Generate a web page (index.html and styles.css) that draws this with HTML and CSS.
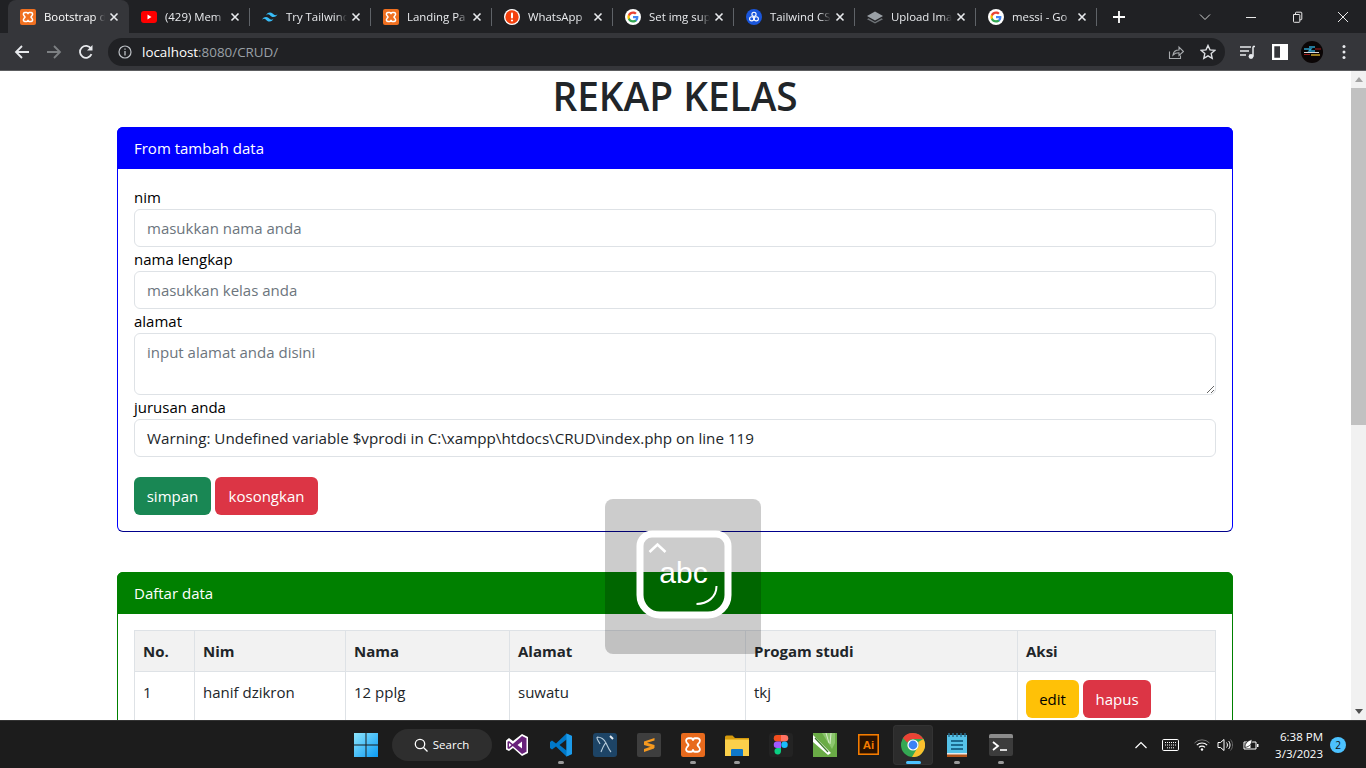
FILE: index.html
```html
<!DOCTYPE html>
<html lang="en">
<head>
<meta charset="utf-8">
<title>REKAP KELAS</title>
<link rel="stylesheet" href="styles.css">
</head>
<body>
<svg class="defs" width="0" height="0" aria-hidden="true">
  <symbol id="i-xampp" viewBox="0 0 16 16">
    <rect width="16" height="16" rx="2" fill="#f07020"/>
    <path d="M5 3.500h1.800c1 0 1.200 1.600 1.200 1.600s.2-1.600 1.200-1.600H11c1.400 0 1.900 1.400 1.400 2.500-.3.8-1.200 1.200-1.400 2 .2.8 1.100 1.200 1.400 2 .5 1.100 0 2.500-1.400 2.500H9.200c-1 0-1.200-1.600-1.200-1.600s-.2 1.600-1.200 1.600H5c-1.400 0-1.900-1.400-1.400-2.500.3-.8 1.200-1.200 1.400-2-.2-.8-1.100-1.200-1.400-2C3.100 4.900 3.600 3.500 5 3.500z" fill="none" stroke="#fff" stroke-width="1.500"/>
  </symbol>
  <symbol id="i-google" viewBox="0 0 16 16">
    <circle cx="8" cy="8" r="8" fill="#fff"/>
    <path d="M13.400 8.100c0-.4 0-.8-.1-1.200H8v2.300h3c-.1.700-.5 1.300-1.100 1.700v1.400h1.800c1.100-1 1.700-2.400 1.700-4.200z" fill="#4285f4"/>
    <path d="M8 13.500c1.500 0 2.700-.5 3.700-1.300l-1.800-1.400c-.5.300-1.100.5-1.900.5-1.400 0-2.700-1-3.100-2.300H3v1.500c.9 1.800 2.800 3 5 3z" fill="#34a853"/>
    <path d="M4.900 9c-.2-.7-.2-1.400 0-2V5.500H3c-.8 1.500-.8 3.400 0 5z" fill="#fbbc05"/>
    <path d="M8 4.700c.8 0 1.500.3 2.100.8l1.600-1.600C10.700 3 9.400 2.500 8 2.500c-2.200 0-4.100 1.200-5 3L4.900 7C5.300 5.700 6.600 4.700 8 4.700z" fill="#ea4335"/>
  </symbol>
  <symbol id="i-close" viewBox="0 0 10 10">
    <path d="M1.500 1.500l7 7M8.500 1.500l-7 7" stroke="#e8eaed" stroke-width="1.600" fill="none"/>
  </symbol>
</svg>

<div class="chrome">
  <div class="tabstrip">
    <div class="tab tab-active">
      <svg class="fav"><use href="#i-xampp"/></svg><span class="tab-title">Bootstrap d</span><svg class="tab-x"><use href="#i-close"/></svg>
    </div>
    <div class="tab tab-next">
      <svg class="fav" viewBox="0 0 16 16"><rect y="2" width="16" height="12" rx="3" fill="#f00"/><path d="M6.500 5.500v5l4-2.500z" fill="#fff"/></svg><span class="tab-title">(429) Mem</span><svg class="tab-x"><use href="#i-close"/></svg>
    </div>
    <div class="tab">
      <svg class="fav" viewBox="0 0 16 16"><path d="M8 3.500c-2 0-3.300 1-4 3 .8-1 1.700-1.400 2.700-1.100.6.100 1 .5 1.500 1 .7.800 1.600 1.600 3.300 1.600 2 0 3.300-1 4-3-.8 1-1.700 1.400-2.700 1.100-.6-.1-1-.5-1.500-1C11 5.300 10.100 3.500 8 3.500zM4 8c-2 0-3.300 1-4 3 .8-1 1.700-1.400 2.700-1.100.6.100 1 .5 1.500 1 .7.800 1.600 1.600 3.300 1.600 2 0 3.300-1 4-3-.8 1-1.700 1.400-2.700 1.100-.6-.1-1-.5-1.500-1C7 9.800 6.100 8 4 8z" fill="#38bdf8"/></svg><span class="tab-title">Try Tailwinc</span><svg class="tab-x"><use href="#i-close"/></svg>
    </div>
    <div class="tab">
      <svg class="fav"><use href="#i-xampp"/></svg><span class="tab-title">Landing Pa</span><svg class="tab-x"><use href="#i-close"/></svg>
    </div>
    <div class="tab">
      <svg class="fav" viewBox="0 0 16 16"><circle cx="8" cy="8" r="8" fill="#fff"/><circle cx="8" cy="8" r="6.700" fill="#f4400d"/><rect x="7" y="3.500" width="2" height="6" rx="1" fill="#fff"/><circle cx="8" cy="11.500" r="1.100" fill="#fff"/></svg><span class="tab-title">WhatsApp</span><svg class="tab-x"><use href="#i-close"/></svg>
    </div>
    <div class="tab">
      <svg class="fav"><use href="#i-google"/></svg><span class="tab-title">Set img sup</span><svg class="tab-x"><use href="#i-close"/></svg>
    </div>
    <div class="tab">
      <svg class="fav" viewBox="0 0 16 16"><circle cx="8" cy="8" r="8" fill="#1a56db"/><circle cx="8" cy="5.300" r="2.100" fill="none" stroke="#fff" stroke-width="1.100"/><circle cx="5.700" cy="9.800" r="2.100" fill="none" stroke="#fff" stroke-width="1.100"/><circle cx="10.300" cy="9.800" r="2.100" fill="none" stroke="#fff" stroke-width="1.100"/></svg><span class="tab-title">Tailwind CS</span><svg class="tab-x"><use href="#i-close"/></svg>
    </div>
    <div class="tab">
      <svg class="fav" viewBox="0 0 16 16"><path d="M8 2.500L16 7 8 11.500 0 7z" fill="#9aa0a6"/><path d="M1.500 9.300L8 13l6.500-3.700L16 10.200 8 14.500 0 10.200z" fill="#6f7478"/></svg><span class="tab-title">Upload Ima</span><svg class="tab-x"><use href="#i-close"/></svg>
    </div>
    <div class="tab">
      <svg class="fav"><use href="#i-google"/></svg><span class="tab-title">messi - Go</span><svg class="tab-x"><use href="#i-close"/></svg>
    </div>
    <svg class="newtab" viewBox="0 0 14 14"><path d="M7 1v12M1 7h12" stroke="#fff" stroke-width="1.800" fill="none"/></svg>
    <div class="winctl">
      <svg class="win-ico" viewBox="0 0 12 12"><path d="M1 3.500l5 5 5-5" stroke="#d0d0d0" fill="none"/></svg>
      <svg class="win-ico" viewBox="0 0 12 12"><path d="M1 6.500h10" stroke="#e8e8e8" fill="none"/></svg>
      <svg class="win-ico" viewBox="0 0 12 12"><path d="M2.500 3.500h5.500a.8.8 0 0 1 .8.800V10.500a.8.8 0 0 1-.8.800H3.300a.8.8 0 0 1-.8-.8zM4.500 3.500V2a.8.8 0 0 1 .8-.8H10a.8.8 0 0 1 .8.800v6a.8.800 0 0 1-.8.800H8.800" stroke="#e8e8e8" fill="none"/></svg>
      <svg class="win-ico" viewBox="0 0 12 12"><path d="M1 1l10 10M11 1L1 11" stroke="#e8e8e8" fill="none"/></svg>
    </div>
  </div>
  <div class="toolbar">
    <svg class="tool" viewBox="0 0 16 16"><path d="M15 8H2M8 2L2 8l6 6" stroke="#e8eaed" stroke-width="1.800" fill="none"/></svg>
    <svg class="tool tool-gap" viewBox="0 0 16 16"><path d="M1 8h13M8 2l6 6-6 6" stroke="#7d8083" stroke-width="1.800" fill="none"/></svg>
    <svg class="tool tool-gap" viewBox="0 0 16 16"><path d="M13.500 10.200A6 6 0 1 1 13 4.500" stroke="#e8eaed" stroke-width="1.800" fill="none"/><path d="M14.500 1v5.500H9z" fill="#e8eaed"/></svg>
    <div class="omnibox">
      <svg class="info" viewBox="0 0 14 14"><circle cx="7" cy="7" r="6" stroke="#bdc1c6" stroke-width="1.200" fill="none"/><path d="M7 6v4.500M7 3.500v1.300" stroke="#bdc1c6" stroke-width="1.300"/></svg>
      <span class="url"><span class="url-host">localhost</span>:8080/CRUD/</span>
      <svg class="omni-ico" viewBox="0 0 16 16"><path d="M1.500 7.500v7h11v-3" stroke="#a8abae" stroke-width="1.100" fill="none"/><path d="M5 11c.5-3.500 3-5 6-5V3l4.500 4.500L11 11.500V8.800c-2.500 0-4.500.6-6 2.200z" stroke="#a8abae" stroke-width="1.100" fill="none"/></svg>
      <svg class="omni-ico" viewBox="0 0 16 16"><path d="M8 1.500l2 4.400 4.800.5-3.600 3.200 1 4.700L8 11.900l-4.200 2.400 1-4.700L1.200 6.400 6 5.900z" stroke="#dfe1e5" stroke-width="1.400" fill="none"/></svg>
    </div>
    <svg class="tool tool-media" viewBox="0 0 16 16"><path d="M0 3h11M0 7h9M0 11h6" stroke="#e8eaed" stroke-width="1.500"/><path d="M13 2.500h2M13 2.500v10" stroke="#e8eaed" stroke-width="1.500" fill="none"/><circle cx="11" cy="12.500" r="2.400" fill="#e8eaed"/></svg>
    <svg class="tool tool-gap" viewBox="0 0 14 14"><path fill-rule="evenodd" d="M0 0h14v14H0zM2 2v10h5V2z" fill="#fff"/></svg>
    <svg class="avatar" viewBox="0 0 22 22"><circle cx="11" cy="11" r="11" fill="#0a0505"/><path d="M3 8h7l-2 2h6M8 6h6" stroke="#2c9fc8" stroke-width="1.300" fill="none"/><path d="M3 11.500h15" stroke="#d8d8d8" stroke-width="1"/><path d="M10 14h9" stroke="#c9a227" stroke-width="1.500"/><path d="M3 13.500h6M14 8h6" stroke="#a01c1c" stroke-width="1.200"/></svg>
    <svg class="tool-dots" viewBox="0 0 4 16"><circle cx="2" cy="2.500" r="1.500" fill="#e8eaed"/><circle cx="2" cy="8" r="1.500" fill="#e8eaed"/><circle cx="2" cy="13.500" r="1.500" fill="#e8eaed"/></svg>
  </div>
</div>

<div class="viewport">
  <main class="page">
    <h1 class="title">REKAP KELAS</h1>
    <section class="card card-blue">
      <div class="card-head head-blue">From tambah data</div>
      <form class="card-body">
        <label class="lbl">nim</label>
        <input class="ctl" type="text" placeholder="masukkan nama anda">
        <label class="lbl">nama lengkap</label>
        <input class="ctl" type="text" placeholder="masukkan kelas anda">
        <label class="lbl">alamat</label>
        <textarea class="ctl ctl-area" placeholder="input alamat anda disini"></textarea>
        <label class="lbl">jurusan anda</label>
        <div class="ctl ctl-select">Warning: Undefined variable $vprodi in C:\xampp\htdocs\CRUD\index.php on line 119</div>
        <div class="actions">
          <button class="btn btn-green btn-simpan" type="button">simpan</button>
          <button class="btn btn-red btn-clear" type="button">kosongkan</button>
        </div>
      </form>
    </section>
    <section class="card card-green">
      <div class="card-head head-green">Daftar data</div>
      <div class="card-body">
        <table class="tbl">
          <colgroup>
            <col class="c1"><col class="c2"><col class="c3"><col class="c4"><col class="c5"><col class="c6">
          </colgroup>
          <thead>
            <tr><th>No.</th><th>Nim</th><th>Nama</th><th>Alamat</th><th>Progam studi</th><th>Aksi</th></tr>
          </thead>
          <tbody>
            <tr>
              <td>1</td><td>hanif dzikron</td><td>12 pplg</td><td>suwatu</td><td>tkj</td>
              <td class="td-actions"><button class="btn btn-yellow btn-edit" type="button">edit</button><button class="btn btn-red btn-hapus" type="button">hapus</button></td>
            </tr>
          </tbody>
        </table>
      </div>
    </section>
    <div class="kbd-hud">
      <svg class="kbd-svg" viewBox="0 0 96 90">
        <path d="M16 4H80a12 12 0 0 1 12 12V65a20 20 0 0 1-20 20H24a20 20 0 0 1-20-20V16a12 12 0 0 1 12-12z" fill="none" stroke="#fff" stroke-width="7"/>
        <path d="M13.500 22l8-7.500 8 7.500" stroke="#fff" stroke-width="2.600" fill="none"/>
        <text x="47.500" y="53" class="kbd-text">abc</text>
        <path d="M60.500 74c11 0 20-7 20-18" stroke="#fff" stroke-width="2" fill="none"/>
      </svg>
    </div>
  </main>
  <div class="scrollbar">
    <div class="sb-btn"><span class="arrow-up"></span></div>
    <div class="sb-thumb"></div>
    <div class="sb-rest"></div>
    <div class="sb-btn"><span class="arrow-down"></span></div>
  </div>
</div>

<footer class="taskbar">
  <div class="task-left"></div>
  <div class="task-center">
    <svg class="start" viewBox="0 0 24 24"><defs><linearGradient id="wg" x1="0" y1="0" x2="1" y2="1"><stop offset="0" stop-color="#8de4fb"/><stop offset="1" stop-color="#0a9bf5"/></linearGradient></defs><path d="M0 0h11.500v11.500H0zM12.500 0H24v11.500H12.500zM0 12.500h11.500V24H0zM12.500 12.500H24V24H12.500z" fill="url(#wg)"/></svg>
    <div class="search">
      <svg class="search-ico" viewBox="0 0 14 14"><circle cx="6" cy="6" r="4.700" stroke="#fff" stroke-width="1.300" fill="none"/><path d="M9.500 9.500l4 4" stroke="#fff" stroke-width="1.300"/></svg>
      <span>Search</span>
    </div>
    <div class="app"><svg class="app-ico" viewBox="0 0 24 24"><path d="M17 1l6 3v16l-6 3-9-8-4 3-3-1.500v-9L4 5l4 3z" fill="#fff"/><path d="M17 3l4.500 2.300v13.400L17 21l-9.200-8L4 16l-1.500-.8V8.800L4 8l3.800 3L17 3z" fill="#68217a"/><path d="M17 8.500v7L12.500 12zM4 10l2.500 2L4 14z" fill="#fff"/></svg></div>
    <div class="app app-on"><svg class="app-ico" viewBox="0 0 24 24"><path d="M17.500 0.500L23 3v18l-5.500 2.500L7 13.500l-4 3-2-1.500v-6l2-1.500 4 3z" fill="#0078c8"/><path d="M17.500 6.500v11L10.500 12z" fill="#1e1e1e"/><path d="M17.500.5L23 3v18l-5.500 2.500z" fill="#1c9bea"/></svg><i class="dot"></i></div>
    <div class="app"><svg class="app-ico" viewBox="0 0 24 24"><rect width="24" height="24" rx="3" fill="#1d4466"/><path d="M4 4c4 0 7 2 9 6s3 7 5 9M13 10c-2 1-3 4-5 9M4 4c-.5 3 2 4 3 7" stroke="#b8cddc" stroke-width="1.100" fill="none"/><path d="M17 3l3 3" stroke="#e8eef3" stroke-width="2"/></svg></div>
    <div class="app"><svg class="app-ico" viewBox="0 0 24 24"><rect width="24" height="24" rx="2" fill="#3e3e3e"/><path d="M17.500 5L7 8.500v3.500l10.500 3v-3L10 9.800l7.500-2.300z" fill="#f79a1f"/><path d="M17 12.500v3L7 19v-3z" fill="#f79a1f"/></svg></div>
    <div class="app app-on"><svg class="app-ico" viewBox="0 0 16 16"><rect width="16" height="16" rx="1.500" fill="#e86a1d"/><path d="M5 3.500h1.800c1 0 1.200 1.600 1.200 1.600s.2-1.600 1.200-1.600H11c1.400 0 1.900 1.400 1.400 2.500-.3.8-1.200 1.200-1.400 2 .2.800 1.100 1.200 1.400 2 .5 1.100 0 2.500-1.400 2.500H9.200c-1 0-1.200-1.600-1.200-1.600s-.2 1.600-1.200 1.600H5c-1.400 0-1.900-1.400-1.400-2.500.3-.8 1.200-1.200 1.400-2-.2-.8-1.100-1.200-1.400-2C3.100 4.900 3.600 3.500 5 3.500z" fill="none" stroke="#fff" stroke-width="1.200"/></svg><i class="dot"></i></div>
    <div class="app app-on"><svg class="app-ico" viewBox="0 0 24 24"><path d="M0 4a1.500 1.500 0 0 1 1.500-1.500h6L10 5h14v18H0z" fill="#d59a0c"/><path d="M0 6.500h24V23H0z" fill="#fbd04b"/><path d="M6 17a1 1 0 0 1 1-1h10a1 1 0 0 1 1 1v6H6z" fill="#0f78c9"/></svg><i class="dot"></i></div>
    <div class="app"><svg class="app-ico" viewBox="0 0 24 24"><rect width="24" height="24" rx="3" fill="#232323"/><path d="M8 2h4v6.500H8a3.250 3.250 0 0 1 0-6.500z" fill="#f24e1e"/><path d="M12 2h4a3.250 3.250 0 0 1 0 6.500h-4z" fill="#ff7262"/><path d="M8 8.500h4V15H8a3.250 3.250 0 0 1 0-6.500z" fill="#a259ff"/><circle cx="15.500" cy="11.750" r="3.250" fill="#1abcfe"/><path d="M8 15h4v3.250a3.250 3.250 0 1 1-4-3.250z" fill="#0acf83"/></svg></div>
    <div class="app"><svg class="app-ico" viewBox="0 0 24 24"><rect width="24" height="24" fill="#6aab46"/><path d="M0 2l18 18-3 2L0 9z" fill="#fff"/><path d="M2 5l13 14" stroke="#3d7a2a" stroke-width="1.200"/><path d="M9 0h13v10l-3 6z" fill="#8cc66e"/><path d="M13 0l3 10M18 0l-1 11" stroke="#d7ecca" stroke-width="1"/></svg></div>
    <div class="app"><svg class="app-ico ico-ai" viewBox="0 0 20 20"><rect x=".75" y=".75" width="18.500" height="18.500" fill="#2a1200" stroke="#f57c00" stroke-width="1.500"/><text x="10" y="14.500" class="ai-text">Ai</text></svg></div>
    <div class="app app-chrome"><svg class="app-ico" viewBox="0 0 24 24"><circle cx="12" cy="12" r="12" fill="#34a853"/><path d="M12 0a12 12 0 0 1 10.400 6H12a6 6 0 0 0-5.600 3.800L2 5A12 12 0 0 1 12 0z" fill="#ea4335"/><path d="M22.400 6A12 12 0 0 1 11 24l5-8.500A6 6 0 0 0 17.200 9z" fill="#fbc02d"/><circle cx="12" cy="12" r="5.600" fill="#fff"/><circle cx="12" cy="12" r="4.400" fill="#3b82f6"/></svg><i class="bar"></i></div>
    <div class="app app-on"><svg class="app-ico" viewBox="0 0 24 24"><rect x="2" y="2" width="20" height="22" fill="#55c2e8"/><path d="M2 21h20v3H2z" fill="#b2541a"/><path d="M2 20h20v1.500H2z" fill="#e8e8e8"/><path d="M4 0v4M8 0v4M12 0v4M16 0v4M20 0v4" stroke="#2a6e8c" stroke-width="1.500"/><path d="M6 8h12M6 12h12M6 16h12" stroke="#1c6b90" stroke-width="2"/></svg><i class="dot"></i></div>
    <div class="app app-on"><svg class="app-ico" viewBox="0 0 24 24"><rect y="1" width="24" height="22" rx="2" fill="#3c3c3c"/><path d="M0 3a2 2 0 0 1 2-2h20a2 2 0 0 1 2 2v2H0z" fill="#8b8b8b"/><path d="M4 9l5 4-5 4" stroke="#fff" stroke-width="1.800" fill="none"/><path d="M11 17h7" stroke="#fff" stroke-width="1.600"/></svg><i class="dot"></i></div>
  </div>
  <div class="tray">
    <svg class="tray-ico tray-chev" viewBox="0 0 14 8"><path d="M1.500 7L7 1.500 12.500 7" stroke="#fff" stroke-width="1.200" fill="none"/></svg>
    <svg class="tray-kbd" viewBox="0 0 17 12"><rect x=".5" y=".5" width="16" height="11" rx="1.200" stroke="#fff" fill="none"/><path d="M3 3.500h11M3 6h11M5 8.800h7" stroke="#fff" stroke-dasharray="1 1"/></svg>
    <svg class="tray-ico tray-wifi" viewBox="0 0 16 12"><path d="M.5 4a10.500 10.500 0 0 1 15 0" stroke="#777" fill="none"/><path d="M2.800 6.200a7.300 7.300 0 0 1 10.400 0M5 8.400a4.200 4.200 0 0 1 6 0" stroke="#fff" stroke-width="1.100" fill="none"/><circle cx="8" cy="10.500" r="1.200" fill="#fff"/></svg>
    <svg class="tray-ico tray-vol" viewBox="0 0 16 14"><path d="M1 4.500h2.500L7 1.500v11l-3.500-3H1z" stroke="#fff" fill="none"/><path d="M9.500 4.500c1.200 1.300 1.200 3.700 0 5M11.500 3c2 2 2 6 0 8" stroke="#fff" fill="none"/><path d="M13.500 1.500c2.700 3 2.700 8 0 11" stroke="#666" fill="none"/></svg>
    <svg class="tray-ico tray-batt" viewBox="0 0 17 12"><path d="M2 3.500h12v7H2z" stroke="#fff" fill="none"/><path d="M15 5.500h1.500v3H15z" fill="#fff"/><path d="M3 9.500V5h5.500v4.500z" fill="#fff"/><path d="M3 9C3 4 6 2 10 1c0 4-2 7-7 8z" fill="#fff" stroke="#1c1c1c" stroke-width=".8"/></svg>
    <div class="clock"><span>6:38 PM</span><span>3/3/2023</span></div>
    <span class="badge">2</span>
  </div>
</footer>
</body>
</html>
```

FILE: styles.css
```css
* { box-sizing: border-box; }
html, body { margin: 0; height: 100%; overflow: hidden; }
body {
  display: flex;
  flex-direction: column;
  height: 768px;
  font-family: "Open Sans", "Noto Sans", sans-serif;
  font-size: 15px;
  color: #212529;
  background: #fff;
}
.defs { position: absolute; }

/* browser chrome */
.chrome { flex: 0 0 71px; display: flex; flex-direction: column; background: #202124; border-bottom: 1px solid #5c5d60; }
.tabstrip { flex: 0 0 33px; display: flex; align-items: center; padding-left: 8px; background: #202124; }
.tab {
  flex: 0 0 121px; height: 33px; display: flex; align-items: center; padding-left: 12px;
  position: relative; color: #e8eaed; font: 11.4px "Open Sans", sans-serif;
}
.tab::after { content: ""; position: absolute; right: 0; top: 8px; height: 18px; width: 1px; background: #5f6368; }
.tab-active { background: #35363a; border-radius: 8px 8px 0 0; color: #fff; }
.tab-active::after { display: none; }
.fav { flex: 0 0 16px; width: 16px; height: 16px; }
.tab-title {
  flex: 0 0 61px; width: 61px; margin-left: 8px; overflow: hidden; white-space: nowrap;
  -webkit-mask-image: linear-gradient(90deg, #000 82%, transparent 100%);
  mask-image: linear-gradient(90deg, #000 82%, transparent 100%);
}
.tab-x { width: 10px; height: 10px; margin-left: 4px; }
.newtab { width: 14px; height: 14px; margin-left: 15px; }
.winctl { margin-left: auto; display: flex; align-items: center; }
.win-ico { width: 12px; height: 12px; margin: 0 17px; }
.toolbar { flex: 1; display: flex; align-items: center; background: #35363a; padding-left: 14px; }
.tool { width: 16px; height: 16px; flex: none; }
.tool-gap { margin-left: 16px; }
.omnibox {
  margin-left: 14px; width: 1117px; height: 28px; border-radius: 14px; background: #202124;
  display: flex; align-items: center; padding-left: 10px; padding-right: 9px;
}
.info { width: 14px; height: 14px; flex: none; }
.url { margin-left: 10px; color: #9aa0a6; font: 13.4px "Open Sans", sans-serif; flex: 1; }
.url-host { color: #fff; }
.omni-ico { width: 16px; height: 16px; margin-left: 16px; flex: none; }
.tool-media { margin-left: 15px; }
.avatar { width: 22px; height: 22px; margin-left: 13px; flex: none; }
.tool-dots { width: 4px; height: 16px; margin-left: 19px; flex: none; }

/* page area */
.viewport { flex: 1; display: flex; min-height: 0; }
.page { flex: 1; position: relative; overflow: hidden; padding: 0 118px 0 117px; }
.title { margin: 2px 0 8px; height: 46px; line-height: 46px; text-align: center; font-size: 38.8px; font-weight: 600; color: #212529; }
.card { border: 1px solid; border-radius: 6px; background: #fff; }
.card-blue { border-color: #00f; border-bottom-color: #00008c; height: 405px; }
.card-green { border-color: #008000; margin-top: 40px; height: 300px; }
.card-head { height: 42px; line-height: 42px; margin: -1px -1px 0; padding: 0 17px; color: #fff; border-radius: 6px 6px 0 0; }
.head-blue { background: #00f; }
.head-green { background: #008000; }
.card-body { padding: 16px; display: flex; flex-direction: column; align-items: stretch; }
.lbl { display: block; height: 24px; line-height: 24px; color: #000; }
.ctl {
  display: block; width: 100%; height: 38px; padding: 0 12px; font: inherit; line-height: 36px; color: #212529;
  border: 1px solid #dee2e6; border-radius: 6px; background: #fff;
}
.ctl::placeholder { color: #6c757d; opacity: 1; }
.ctl-area { height: 62px; padding-top: 6px; line-height: 24px; resize: vertical; }
.ctl-select { font-size: 15.2px; }
.actions { display: flex; gap: 4px; margin-top: 20px; }
.btn {
  display: inline-block; height: 38px; padding: 0; border: 1px solid transparent; border-radius: 6px;
  font: inherit; color: #fff; vertical-align: middle; text-align: center;
}
.btn-green { background: #198754; }
.btn-red { background: #dc3545; }
.btn-yellow { background: #ffc107; color: #000; }
.btn-simpan { width: 77px; }
.btn-clear { width: 103px; }
.btn-edit { width: 53px; margin-right: 4px; }
.btn-hapus { width: 68px; }

.tbl { width: calc(100% - 1px); border-collapse: collapse; table-layout: fixed; }
.tbl th, .tbl td { border: 1px solid #dee2e6; padding: 8px; text-align: left; }
.tbl th { background: #f2f2f2; height: 41px; font-weight: 700; color: #212529; }
.tbl td { vertical-align: top; line-height: 24px; }
.c1 { width: 60px; } .c2 { width: 151px; } .c3 { width: 164px; } .c4 { width: 236px; } .c5 { width: 272px; } .c6 { width: 198px; }

/* on-screen keyboard hint */
.kbd-hud {
  position: absolute; left: 605px; top: 428px; width: 156px; height: 155px; border-radius: 8px;
  background: rgba(0, 0, 0, .2); padding: 31px 0 0 31px;
}
.kbd-svg { display: block; width: 96px; height: 90px; }
.kbd-text { fill: #fff; font: 30px "Liberation Sans", sans-serif; text-anchor: middle; }

/* scrollbar */
.scrollbar { flex: 0 0 15px; display: flex; flex-direction: column; background: #f1f1f1; }
.sb-btn { flex: 0 0 17px; display: flex; align-items: center; justify-content: center; }
.arrow-up { border: 4px solid transparent; border-top: 0; border-bottom: 5px solid #a3a3a3; }
.arrow-down { border: 4px solid transparent; border-bottom: 0; border-top: 5px solid #505050; }
.sb-thumb { flex: 0 0 337px; background: #c1c1c1; }
.sb-rest { flex: 1; }

/* taskbar */
.taskbar {
  flex: 0 0 48px; display: grid; grid-template-columns: 1fr auto 1fr; align-items: center;
  background: #1c1c1c; border-top: 1px solid #333; color: #fff;
}
.task-center { display: flex; align-items: center; padding-left: 10px; }
.start { width: 24px; height: 24px; margin-right: 14px; }
.search {
  width: 100px; height: 32px; border-radius: 16px; background: #2e2e2e; display: flex; align-items: center;
  justify-content: center; gap: 5px; font: 11.5px "Open Sans", sans-serif; margin-right: 3px;
}
.search-ico { width: 14px; height: 14px; }
.app { width: 44px; height: 40px; display: flex; align-items: center; justify-content: center; position: relative; border-radius: 4px; }
.app-ico { width: 24px; height: 24px; }
.ico-ai { width: 21px; height: 21px; }
.ai-text { fill: #f57c00; font: 700 11px "Liberation Sans", sans-serif; text-anchor: middle; }
.dot { position: absolute; left: 19px; bottom: 1px; width: 6px; height: 3px; border-radius: 2px; background: #9a9a9a; }
.app-chrome { background: #2c2c2c; width: 40px; margin: 0 2px; box-shadow: inset 0 0 0 1px #333; }
.bar { position: absolute; left: 13px; bottom: 1px; width: 15px; height: 3px; border-radius: 2px; background: #4cc2ff; }
.tray { display: flex; align-items: center; justify-content: flex-end; padding-right: 20px; }
.tray-ico { flex: none; }
.tray-chev { width: 14px; height: 8px; margin-right: 14px; }
.tray-kbd { width: 17px; height: 12px; margin-right: 15px; }
.tray-wifi { width: 16px; height: 12px; margin-right: 7px; }
.tray-vol { width: 16px; height: 14px; margin-right: 9px; }
.tray-batt { width: 17px; height: 13px; margin-right: 16px; }
.clock { display: flex; flex-direction: column; align-items: flex-end; font: 11.5px/17px "Open Sans", sans-serif; }
.badge {
  margin-left: 7px; width: 16px; height: 16px; border-radius: 50%; background: #4cc2ff; color: #111;
  font: 10px/16px "Open Sans", sans-serif; text-align: center;
}
```
